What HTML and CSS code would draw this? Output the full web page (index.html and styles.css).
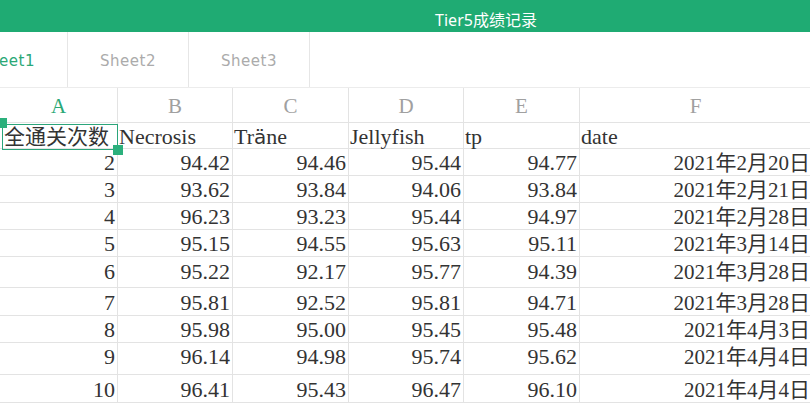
FILE: index.html
```html
<!DOCTYPE html>
<html lang="zh">
<head>
  <meta charset="UTF-8" />
  <meta name="viewport" content="width=device-width, initial-scale=1.0" />
  <title>Tier5成绩记录</title>
  <link rel="stylesheet" href="styles.css">
</head>
<body>

  <div class="topbar">Tier5成绩记录</div>

  <div class="tabs">
    <div class="tab active">Sheet1</div>
    <div class="tab">Sheet2</div>
    <div class="tab">Sheet3</div>
  </div>

  <div class="sheet">
    <div class="row colhead">
      <div class="cell sel">A</div>
      <div class="cell">B</div>
      <div class="cell">C</div>
      <div class="cell">D</div>
      <div class="cell">E</div>
      <div class="cell">F</div>
    </div>
    <div class="row r25 names">
      <div class="cell first">全通关次数</div>
      <div class="cell">Necrosis</div>
      <div class="cell">Tr<span class="odd">ä</span>ne</div>
      <div class="cell">Jellyfish</div>
      <div class="cell">tp</div>
      <div class="cell">date</div>
    </div>
    <div class="row r27 num">
      <div class="cell">2</div><div class="cell">94.42</div><div class="cell">94.46</div><div class="cell">95.44</div><div class="cell">94.77</div><div class="cell date">2021年2月20日</div>
    </div>
    <div class="row r27 num">
      <div class="cell">3</div><div class="cell">93.62</div><div class="cell">93.84</div><div class="cell">94.06</div><div class="cell">93.84</div><div class="cell date">2021年2月21日</div>
    </div>
    <div class="row r27 num">
      <div class="cell">4</div><div class="cell">96.23</div><div class="cell">93.23</div><div class="cell">95.44</div><div class="cell">94.97</div><div class="cell date">2021年2月28日</div>
    </div>
    <div class="row r28 num">
      <div class="cell">5</div><div class="cell">95.15</div><div class="cell">94.55</div><div class="cell">95.63</div><div class="cell">95.11</div><div class="cell date">2021年3月14日</div>
    </div>
    <div class="row r31 num">
      <div class="cell">6</div><div class="cell">95.22</div><div class="cell">92.17</div><div class="cell">95.77</div><div class="cell">94.39</div><div class="cell date">2021年3月28日</div>
    </div>
    <div class="row r27 num">
      <div class="cell">7</div><div class="cell">95.81</div><div class="cell">92.52</div><div class="cell">95.81</div><div class="cell">94.71</div><div class="cell date">2021年3月28日</div>
    </div>
    <div class="row r27 num">
      <div class="cell">8</div><div class="cell">95.98</div><div class="cell">95.00</div><div class="cell">95.45</div><div class="cell">95.48</div><div class="cell date">2021年4月3日</div>
    </div>
    <div class="row r33 num">
      <div class="cell">9</div><div class="cell">96.14</div><div class="cell">94.98</div><div class="cell">95.74</div><div class="cell">95.62</div><div class="cell date">2021年4月4日</div>
    </div>
    <div class="row r28 num">
      <div class="cell">10</div><div class="cell">96.41</div><div class="cell">95.43</div><div class="cell">96.47</div><div class="cell">96.10</div><div class="cell date">2021年4月4日</div>
    </div>

    <!-- selected cell A1 -->
    <div class="selection">
      <span class="handle tl"></span>
      <span class="handle br"></span>
    </div>
  </div>

</body>
</html>
```

FILE: styles.css
```css
body {
  margin: 0;
  width: 810px;
  height: 404px;
  overflow: hidden;
  background: #fff;
  font-family: "Liberation Serif", "Noto Sans CJK SC", serif;
}
.topbar {
  height: 24px;
  padding: 8px 0 0 162px;
  background: #1fab73;
  color: #fff;
  text-align: center;
  font-family: "Noto Sans", "Noto Sans CJK SC", sans-serif;
  font-size: 16px;
  line-height: 24px;
}
.tabs {
  display: flex;
  height: 55px;
  border-bottom: 1px solid #ececec;
}
.tab {
  width: 120px;
  flex: none;
  border-right: 1px solid #e6e6e6;
  color: #ababab;
  font-family: "DejaVu Sans", sans-serif;
  font-size: 15px;
  letter-spacing: 0.5px;
  text-align: center;
  line-height: 59px;
}
.tab.active {
  margin-left: -53px;
  color: #2aa876;
}
.sheet {
  position: relative;
}
.row {
  display: grid;
  grid-template-columns: 118px 115px 116px 115px 116px 232px;
  color: #333;
  font-size: 22px;
  line-height: 24px;
}
.cell {
  box-sizing: border-box;
  padding: 3px 2px 0 1px;
  border-right: 1px solid #e3e3e3;
  border-bottom: 1px solid #e3e3e3;
  white-space: nowrap;
}
.colhead {
  height: 35px;
  color: #a0a0a0;
  font-size: 21px;
}
.colhead .cell {
  padding: 6px 0 0;
  text-align: center;
}
.colhead .sel {
  color: #2aa876;
}
.names {
  line-height: 22px;
}
.first {
  padding-left: 4px;
  font-size: 21px;
}
.odd {
  font-family: "DejaVu Sans", sans-serif;
  font-size: 20px;
}
.num .cell {
  text-align: right;
}
.num .date {
  padding-right: 1px;
  font-size: 21px;
}
.r25 { height: 25px; }
.r27 { height: 27px; }
.r28 { height: 28px; }
.r31 { height: 31px; }
.r33 { height: 33px; }

.selection {
  position: absolute;
  left: 2px;
  top: 36px;
  width: 114px;
  height: 24px;
  border: 1px solid #2ba57a;
}
.handle {
  position: absolute;
  width: 10px;
  height: 10px;
  background: #2bb07c;
}
.handle.tl {
  left: -6px;
  top: -7px;
}
.handle.br {
  right: -6px;
  bottom: -6px;
}
```
